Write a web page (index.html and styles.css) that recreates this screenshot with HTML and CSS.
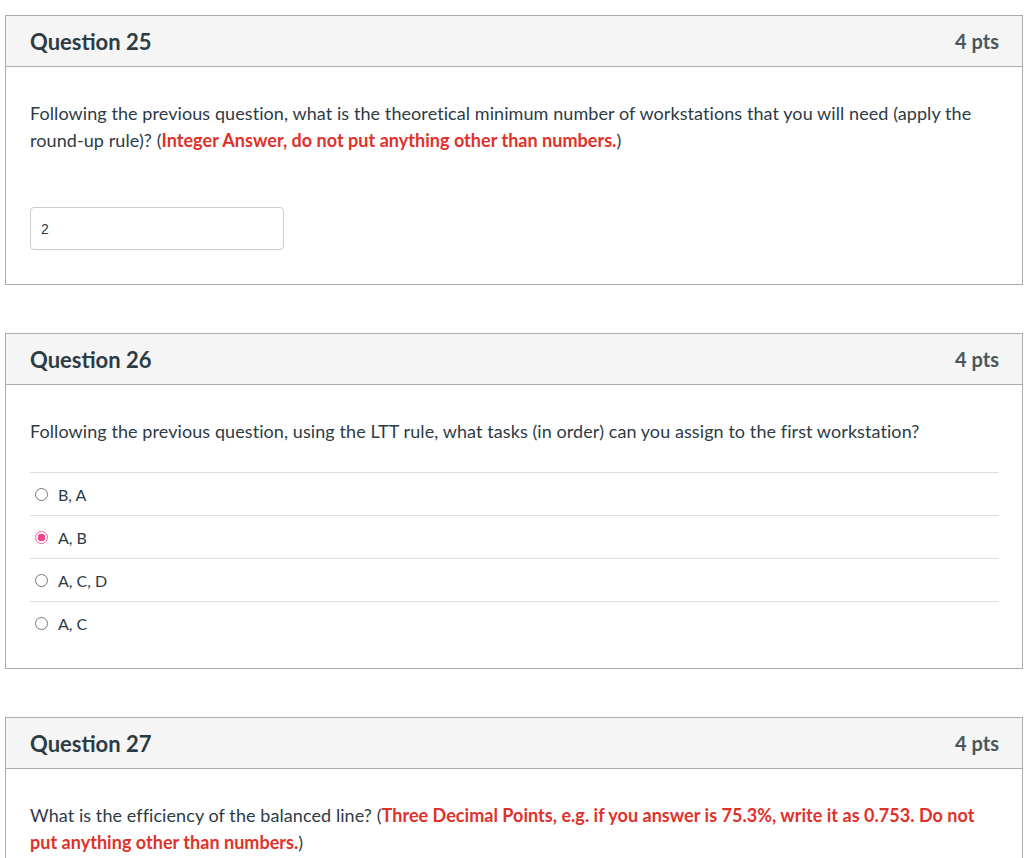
FILE: index.html
```html
<!DOCTYPE html>
<html>
<head>
<meta charset="utf-8">
<link rel="stylesheet" href="styles.css">
</head>
<body>
<div class="quiz">
  <div class="card">
    <div class="card-head"><span class="q-title">Question 25</span><span class="q-pts">4 pts</span></div>
    <div class="card-body">
      <p class="q-text">Following the previous question, what is the theoretical minimum number of workstations that you will need (apply the round-up rule)? (<strong class="red">Integer Answer, do not put anything other than numbers.</strong>)</p>
      <div class="answer-input">2</div>
    </div>
  </div>

  <div class="card">
    <div class="card-head"><span class="q-title">Question 26</span><span class="q-pts">4 pts</span></div>
    <div class="card-body card-body-options">
      <p class="q-text">Following the previous question, using the LTT rule, what tasks (in order) can you assign to the first workstation?</p>
      <ul class="options">
        <li class="option"><span class="radio"></span><span>B, A</span></li>
        <li class="option"><span class="radio checked"></span><span>A, B</span></li>
        <li class="option"><span class="radio"></span><span>A, C, D</span></li>
        <li class="option"><span class="radio"></span><span>A, C</span></li>
      </ul>
    </div>
  </div>

  <div class="card">
    <div class="card-head"><span class="q-title">Question 27</span><span class="q-pts">4 pts</span></div>
    <div class="card-body">
      <p class="q-text">What is the efficiency of the balanced line? (<strong class="red">Three Decimal Points, e.g. if you answer is 75.3%, write it as 0.753. Do not put anything other than numbers.</strong>)</p>
    </div>
  </div>
</div>
</body>
</html>
```

FILE: styles.css
```css
* { box-sizing: border-box; }
html, body { margin: 0; padding: 0; background: #fff; }
body {
  font-family: Lato, "Noto Sans", sans-serif;
  color: #2d3b45;
  overflow: hidden;
}
.quiz {
  padding: 15px 0 0 5px;
  display: flex;
  flex-direction: column;
  gap: 48px;
}
.card {
  width: 1018px;
  border: 1px solid #ababab;
  background: #fff;
}
.card-head {
  height: 51px;
  background: #f5f5f5;
  border-bottom: 1px solid #ababab;
  display: flex;
  align-items: center;
  justify-content: space-between;
  padding: 0 23px 0 24px;
}
.q-title { font-size: 22px; font-weight: 700; }
.q-pts { font-size: 20px; font-weight: 700; color: #4a555d; }
.card-body {
  padding: 33px 23px 34px 24px;
}
.card-body-options { padding-bottom: 24px; }
.q-text {
  margin: 0;
  font-size: 18px;
  line-height: 27px;
  letter-spacing: 0.08px;
}
.red { color: #e0312a; font-weight: 700; letter-spacing: 0.03px; }
.answer-input {
  margin-top: 53px;
  width: 254px;
  height: 43px;
  border: 1px solid #c7cdd1;
  border-radius: 4px;
  padding: 0 10px;
  display: flex;
  align-items: center;
  font-family: "Liberation Sans", Arial, sans-serif;
  font-size: 14px;
  color: #2d3b45;
}
.options {
  list-style: none;
  margin: 27px 0 0 0;
  padding: 0;
}
.option {
  height: 43px;
  border-top: 1px solid #dcdfe1;
  display: flex;
  align-items: center;
  padding-left: 5px;
  gap: 10px;
  font-size: 16px;
}
.radio {
  width: 13px;
  height: 13px;
  border-radius: 50%;
  border: 1px solid #767676;
  flex: none;
}
.radio.checked {
  border: 1.5px solid #f0609a;
  background: radial-gradient(circle, #f0468d 0 3.6px, #fff 4.1px);
}
```
